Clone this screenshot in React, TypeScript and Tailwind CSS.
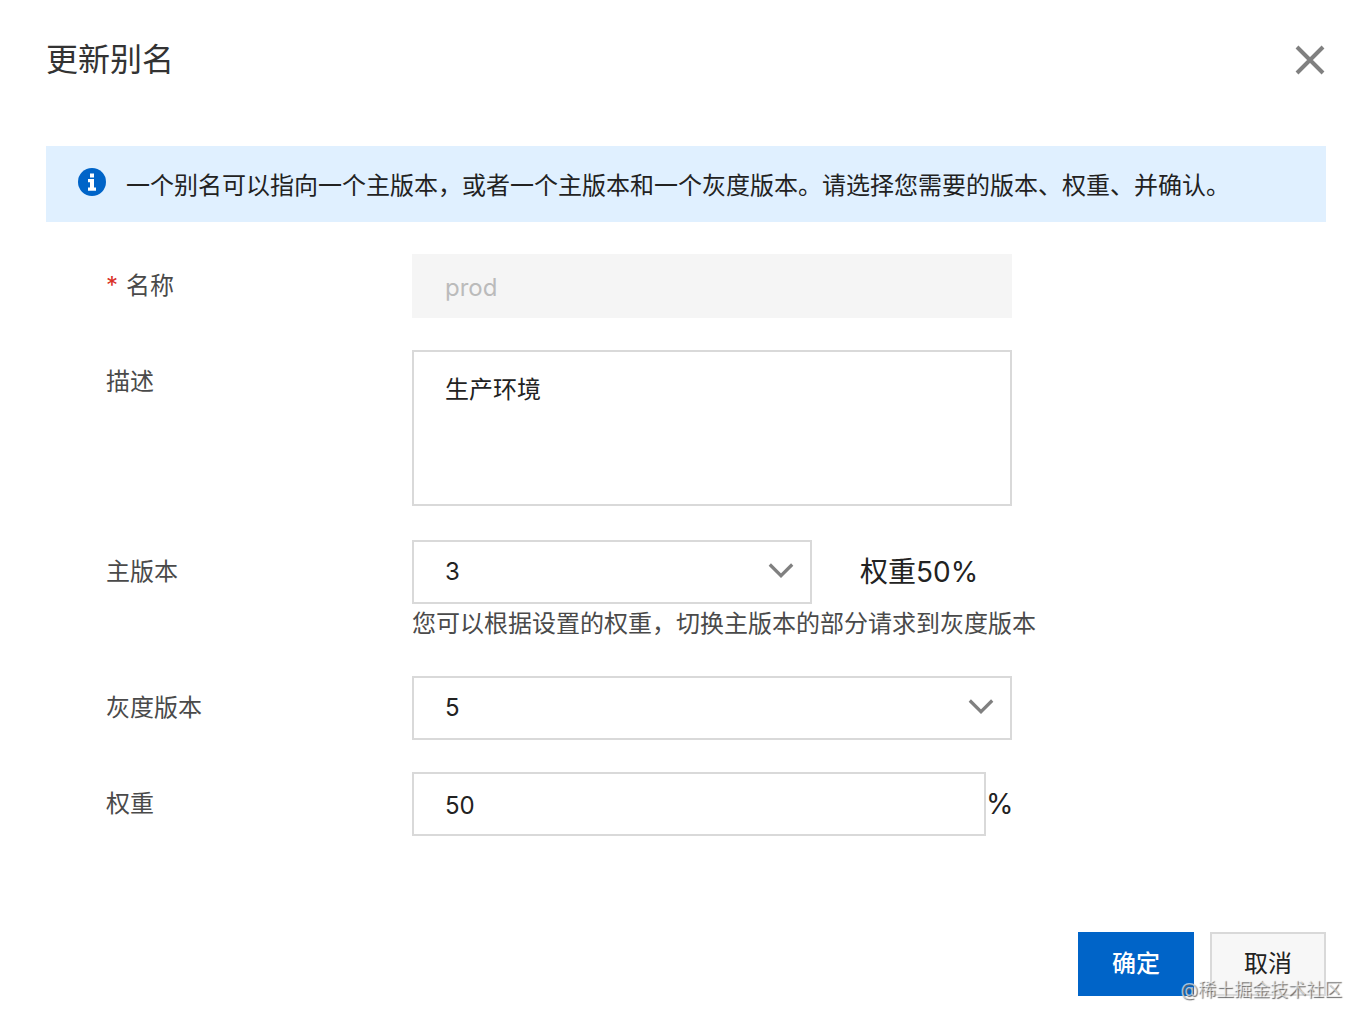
import React, { useState } from "react";

interface VersionSelectProps {
  id: string;
  value: string;
  options: string[];
  onChange: (value: string) => void;
}

// select with a custom chevron instead of the native arrow
const VersionSelect = ({ id, value, options, onChange }: VersionSelectProps) => (
  <div className="relative">
    <select
      id={id}
      value={value}
      onChange={(e) => onChange(e.target.value)}
      className="block h-16 w-full appearance-none border-2 border-[#d9d9d9] bg-white pl-[31px] pr-16 text-[#222]"
    >
      {options.map((option) => (
        <option key={option} value={option}>
          {option}
        </option>
      ))}
    </select>
    <svg
      className="pointer-events-none absolute right-4 top-5 h-6 w-7"
      viewBox="0 0 28 24"
      fill="none"
      stroke="#808080"
      strokeWidth="3.2"
      aria-hidden="true"
    >
      <path d="M1.8 4.5 13 15.7 24.2 4.5" />
    </svg>
  </div>
);

interface FormRowProps {
  id: string;
  label: string;
  required?: boolean;
  children: React.ReactNode;
}

const FormRow = ({ id, label, required, children }: FormRowProps) => (
  <div className="flex">
    <label htmlFor={id} className="w-[306px] shrink-0 leading-[64px] text-[#4a4a4a]">
      {required && <span className="mr-2 text-[#d93026]">*</span>}
      {label}
    </label>
    <div className="min-w-0 flex-1">{children}</div>
  </div>
);

const App = () => {
  const [description, setDescription] = useState("生产环境");
  const [mainVersion, setMainVersion] = useState("3");
  const [grayVersion, setGrayVersion] = useState("5");
  const [weight, setWeight] = useState("50");

  return (
    <div
      role="dialog"
      aria-labelledby="dialog-title"
      className="relative bg-white pb-8 pl-[46px] pr-11 pt-9 font-[Inter,'Noto_Sans_CJK_SC',sans-serif] text-2xl text-[#222]"
    >
      <header className="flex h-12 items-center justify-between">
        <h1 id="dialog-title" className="text-[32px] leading-[48px] text-[#333]">
          更新别名
        </h1>
        <button type="button" aria-label="关闭">
          <svg className="size-8" viewBox="0 0 32 32" stroke="#808080" strokeWidth="4" aria-hidden="true">
            <path d="M3 3 29 29M29 3 3 29" />
          </svg>
        </button>
      </header>

      <div className="mt-[62px] flex gap-5 bg-[#e0f0ff] px-8 pb-[18px] pt-[22px]">
        <svg className="size-7 shrink-0" viewBox="0 0 28 28" aria-hidden="true">
          <circle cx="14" cy="14" r="14" fill="#0064c8" />
          <path
            d="M12 5.6h4v3.8h-4zM10 11h6v8.6h2v3.2h-8v-3.2h2v-5.4h-2z"
            fill="#fff"
          />
        </svg>
        <p className="leading-9">
          一个别名可以指向一个主版本，或者一个主版本和一个灰度版本。请选择您需要的版本、权重、并确认。
        </p>
      </div>

      <form className="mt-8 flex flex-col gap-8 pl-[60px]" onSubmit={(e) => e.preventDefault()}>
        <FormRow id="name" label="名称" required>
          <input
            id="name"
            type="text"
            value="prod"
            disabled
            className="block h-16 w-full max-w-[600px] border-2 border-[#f5f5f5] bg-[#f5f5f5] px-[31px] pt-0.5 text-[#bbb]"
          />
        </FormRow>

        <FormRow id="description" label="描述">
          <textarea
            id="description"
            value={description}
            onChange={(e) => setDescription(e.target.value)}
            className="mb-0.5 block h-[156px] w-full max-w-[600px] resize-none border-2 border-[#d9d9d9] px-[31px] py-5 leading-9"
          />
        </FormRow>

        <FormRow id="main-version" label="主版本">
          <div className="flex items-center gap-12">
            <div className="w-[400px]">
              <VersionSelect
                id="main-version"
                value={mainVersion}
                options={["1", "2", "3", "4", "5"]}
                onChange={setMainVersion}
              />
            </div>
            <span className="text-[28px] leading-10">权重{100 - Number(weight)}%</span>
          </div>
          <p className="leading-10 text-[#4a4a4a]">您可以根据设置的权重，切换主版本的部分请求到灰度版本</p>
        </FormRow>

        <FormRow id="gray-version" label="灰度版本">
          <div className="max-w-[600px]">
            <VersionSelect
              id="gray-version"
              value={grayVersion}
              options={["1", "2", "3", "4", "5"]}
              onChange={setGrayVersion}
            />
          </div>
        </FormRow>

        <FormRow id="weight" label="权重">
          <div className="flex items-center">
            <input
              id="weight"
              type="text"
              value={weight}
              onChange={(e) => setWeight(e.target.value)}
              className="block h-16 w-full max-w-[574px] border-2 border-[#d9d9d9] px-[31px] pt-0.5"
            />
            <span className="text-[28px] leading-10">%</span>
          </div>
        </FormRow>
      </form>

      <footer className="mt-24 flex justify-end gap-4">
        <button type="button" className="h-16 w-[116px] bg-[#0064c8] font-medium text-white">
          确定
        </button>
        <button type="button" className="h-16 w-[116px] border-2 border-[#d9d9d9] bg-[#f7f7f7]">
          取消
        </button>
      </footer>

      {/* watermark over the footer */}
      <span className="pointer-events-none absolute bottom-6 right-7 text-lg leading-7 text-white/60 [text-shadow:1px_1px_1px_#666]">
        @稀土掘金技术社区
      </span>
    </div>
  );
};

export default App;
